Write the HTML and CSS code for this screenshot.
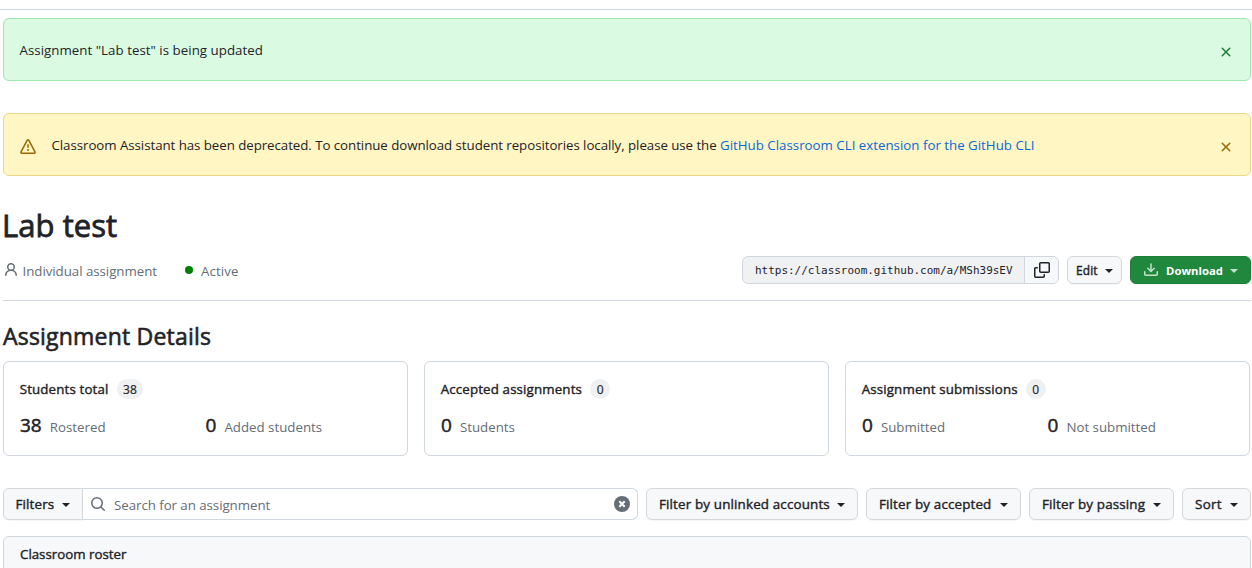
FILE: index.html
```html
<!DOCTYPE html>
<html lang="en">
<head>
<meta charset="utf-8">
<title>Lab test</title>
<link rel="stylesheet" href="styles.css">
</head>
<body>
<div class="topline"></div>
<main class="page">
  <div class="flash flash-success">
    <span class="flash-text"><span class="t t-updated">Assignment "Lab test" is being updated</span></span>
    <svg class="close" width="16" height="16" viewBox="0 0 16 16"><path d="M3.72 3.72a.75.75 0 0 1 1.06 0L8 6.94l3.22-3.22a.749.749 0 0 1 1.275.326.749.749 0 0 1-.215.734L9.06 8l3.22 3.22a.749.749 0 0 1-.326 1.275.749.749 0 0 1-.734-.215L8 9.06l-3.22 3.22a.751.751 0 0 1-1.042-.018.751.751 0 0 1-.018-1.042L6.94 8 3.72 4.78a.75.75 0 0 1 0-1.06Z"/></svg>
  </div>
  <div class="flash flash-warn">
    <svg class="alert" width="16" height="16" viewBox="0 0 16 16"><path d="M6.457 1.047c.659-1.234 2.427-1.234 3.086 0l6.082 11.378A1.75 1.75 0 0 1 14.082 15H1.918a1.75 1.75 0 0 1-1.543-2.575Zm1.763.707a.25.25 0 0 0-.44 0L1.698 13.132a.25.25 0 0 0 .22.368h12.164a.25.25 0 0 0 .22-.368Zm.53 3.996v2.5a.75.75 0 0 1-1.5 0v-2.5a.75.75 0 0 1 1.5 0ZM9 11a1 1 0 1 1-2 0 1 1 0 0 1 2 0Z"/></svg>
    <span class="flash-text"><span class="t t-warn">Classroom Assistant has been deprecated. To continue download student repositories locally, please use the </span><a class="t">GitHub Classroom CLI extension for the GitHub CLI</a></span>
    <svg class="close" width="16" height="16" viewBox="0 0 16 16"><path d="M3.72 3.72a.75.75 0 0 1 1.06 0L8 6.94l3.22-3.22a.749.749 0 0 1 1.275.326.749.749 0 0 1-.215.734L9.06 8l3.22 3.22a.749.749 0 0 1-.326 1.275.749.749 0 0 1-.734-.215L8 9.06l-3.22 3.22a.751.751 0 0 1-1.042-.018.751.751 0 0 1-.018-1.042L6.94 8 3.72 4.78a.75.75 0 0 1 0-1.06Z"/></svg>
  </div>

  <h1 class="title">Lab test</h1>
  <div class="meta">
    <svg class="person" width="16" height="16" viewBox="0 0 16 16"><path d="M10.561 8.073a6.005 6.005 0 0 1 3.432 5.142.75.75 0 1 1-1.498.07 4.5 4.5 0 0 0-8.99 0 .75.75 0 0 1-1.498-.07 6.004 6.004 0 0 1 3.431-5.142 3.999 3.999 0 1 1 5.123 0ZM10.5 5a2.5 2.5 0 1 0-5 0 2.5 2.5 0 0 0 5 0Z"/></svg>
    <span class="kind">Individual assignment</span>
    <span class="dot"></span>
    <span class="active">Active</span>
    <div class="actions">
      <div class="link-box">
        <span class="url">https://classroom.github.com/a/MSh39sEV</span>
        <span class="copy"><svg width="16" height="16" viewBox="0 0 16 16"><path d="M0 6.75C0 5.784.784 5 1.75 5h1.5a.75.75 0 0 1 0 1.5h-1.5a.25.25 0 0 0-.25.25v7.5c0 .138.112.25.25.25h7.5a.25.25 0 0 0 .25-.25v-1.5a.75.75 0 0 1 1.5 0v1.5A1.75 1.75 0 0 1 9.25 16h-7.5A1.75 1.75 0 0 1 0 14.25Z"/><path d="M5 1.75C5 .784 5.784 0 6.75 0h7.5C15.216 0 16 .784 16 1.75v7.5A1.75 1.75 0 0 1 14.25 11h-7.5A1.75 1.75 0 0 1 5 9.25Zm1.75-.25a.25.25 0 0 0-.25.25v7.5c0 .138.112.25.25.25h7.5a.25.25 0 0 0 .25-.25v-7.5a.25.25 0 0 0-.25-.25Z"/></svg></span>
      </div>
      <button class="btn btn-sm edit"><span>Edit</span><i class="caret"></i></button>
      <button class="btn btn-sm download"><svg width="16" height="16" viewBox="0 0 16 16"><path d="M2.75 14A1.75 1.75 0 0 1 1 12.25v-2.5a.75.75 0 0 1 1.5 0v2.5c0 .138.112.25.25.25h10.5a.25.25 0 0 0 .25-.25v-2.5a.75.75 0 0 1 1.5 0v2.5A1.75 1.75 0 0 1 13.25 14Z"/><path d="M7.25 7.689V2a.75.75 0 0 1 1.5 0v5.689l1.97-1.969a.749.749 0 1 1 1.06 1.06l-3.25 3.25a.749.749 0 0 1-1.06 0L4.22 6.78a.749.749 0 1 1 1.06-1.06l1.97 1.969Z"/></svg><span class="label">Download</span><i class="caret"></i></button>
    </div>
  </div>

  <h2 class="subtitle">Assignment Details</h2>
  <div class="cards">
    <section class="card">
      <div class="card-head"><span>Students total</span><span class="counter">38</span></div>
      <div class="stats">
        <div class="stat"><b>38</b><span>Rostered</span></div>
        <div class="stat"><b>0</b><span>Added students</span></div>
      </div>
    </section>
    <section class="card">
      <div class="card-head"><span>Accepted assignments</span><span class="counter">0</span></div>
      <div class="stats">
        <div class="stat"><b>0</b><span>Students</span></div>
      </div>
    </section>
    <section class="card">
      <div class="card-head"><span>Assignment submissions</span><span class="counter">0</span></div>
      <div class="stats">
        <div class="stat"><b>0</b><span>Submitted</span></div>
        <div class="stat"><b>0</b><span>Not submitted</span></div>
      </div>
    </section>
  </div>

  <div class="toolbar">
    <div class="search">
      <button class="btn filters"><span>Filters</span><i class="caret"></i></button>
      <div class="field">
        <svg width="16" height="16" viewBox="0 0 16 16"><path d="M10.68 11.74a6 6 0 0 1-7.922-8.982 6 6 0 0 1 8.982 7.922l3.04 3.04a.749.749 0 0 1-.326 1.275.749.749 0 0 1-.734-.215ZM11.5 7a4.499 4.499 0 1 0-8.997 0A4.499 4.499 0 0 0 11.5 7Z"/></svg>
        <span class="placeholder">Search for an assignment</span>
        <svg class="clear" width="16" height="16" viewBox="0 0 16 16"><circle cx="8" cy="8" r="8"/><path d="M5.3 5.3l5.4 5.4M10.7 5.3l-5.4 5.4"/></svg>
      </div>
    </div>
    <button class="btn b-unlinked"><span>Filter by unlinked accounts</span><i class="caret"></i></button>
    <button class="btn b-accepted"><span>Filter by accepted</span><i class="caret"></i></button>
    <button class="btn b-passing"><span>Filter by passing</span><i class="caret"></i></button>
    <button class="btn b-sort"><span>Sort</span><i class="caret"></i></button>
  </div>

  <div class="roster">Classroom roster</div>
</main>
</body>
</html>
```
FILE: styles.css
```css
* { box-sizing: border-box; }
body { margin: 0; height: 568px; overflow: hidden; background: #fff; color: #1f2328; font: 13.3px/21px "Open Sans", "Noto Sans", sans-serif; }
svg { display: block; flex: none; fill: currentColor; }
.topline { height: 10px; border-bottom: 1px solid #d0d7de; }
.page { margin: 8px 1px 0 3px; }
.t { white-space: pre; }

.flash { display: flex; align-items: center; height: 63px; padding: 0 16px; border: 1px solid; border-radius: 6px; }
.flash-text { flex: 1; padding-top: 2px; margin-left: -0.5px; }
.t-updated { letter-spacing: 0.03px; }
.t-warn { letter-spacing: -0.055px; }
.close { margin-top: 4px; }
.flash-success { background: #dafbe1; border-color: #a1e5b0; }
.flash-success .close { color: #1a7f37; }
.flash-warn { margin-top: 32px; background: #fff6c4; border-color: #eed888; }
.flash-warn svg { color: #9a6700; }
.alert { margin: 4px 16px 0 0; }
a { color: #0969da; }

/* Medium weight: regular glyphs with a thin outline */
.title, .subtitle, .card-head, .stat b, .btn, .roster { font-weight: 400; -webkit-text-stroke: 0.4px currentColor; }
.title { margin: 25px 0 0 -1px; padding-bottom: 1px; font-size: 31px; line-height: 48px; letter-spacing: 0.05px; -webkit-text-stroke-width: 0.8px; }
.meta { display: flex; align-items: center; height: 51px; padding-bottom: 10px; border-bottom: 1px solid #d0d7de; color: #656d76; }
.kind { width: 162px; margin: 0 0.5px 0 -0.5px; padding-top: 2px; letter-spacing: -0.04px; }
.person { margin-right: 4px; }
.dot { width: 8px; height: 8px; border-radius: 50%; background: #008000; margin-right: 8px; }
.active { padding-top: 2px; letter-spacing: 0.1px; }
.actions { display: flex; margin-left: auto; color: #1f2328; }
.link-box { display: flex; width: 317px; height: 28px; margin-right: 8px; border: 1px solid #d0d7de; border-radius: 6px; overflow: hidden; background: #eff1f3; }
.url { flex: 1; padding-left: 12px; font: 10.98px/28px "DejaVu Sans Mono", monospace; }
.copy { width: 34px; display: grid; place-items: center; border-left: 1px solid #d0d7de; background: #f6f8fa; }

.btn { display: flex; align-items: center; justify-content: space-between; height: 32px; margin: 0; padding: 0 12px; border: 1px solid #d5d8da; border-radius: 6px; background: #f6f8fa; color: #1f2328; font: 13.4px/20px "Open Sans", sans-serif; letter-spacing: 0.15px; white-space: nowrap; box-shadow: 0 1px 0 rgba(31,35,40,.04); }
.caret { flex: none; width: 0; height: 0; margin-top: 1px; border: 4px solid transparent; border-top-color: currentColor; border-bottom: 0; }
.btn-sm { height: 28px; font-size: 11.9px; padding: 0 8px; }
.edit { width: 55px; margin-right: 8px; }
.download { width: 121px; padding: 0 12px; background: #1f883d; border-color: #1f7d3a; color: #fff; font-weight: 700; font-size: 11.3px; letter-spacing: 0; -webkit-text-stroke-width: 0; }
.label { padding-top: 1px; }
.download svg, .download .caret { opacity: .75; }

.subtitle { margin: 16px 0 0; font-size: 23px; line-height: 38px; padding-bottom: 2px; letter-spacing: 0.2px; -webkit-text-stroke-width: 0.6px; }
.cards { display: flex; gap: 16px; margin-top: 4px; }
.card { width: 405px; height: 95px; padding: 16px; border: 1px solid #d0d7de; border-radius: 6px; }
.card-head { display: flex; align-items: center; height: 22px; margin-left: -0.3px; letter-spacing: 0.15px; }
.counter { margin-left: 8px; min-width: 20px; padding: 1px 6.6px 0; border-radius: 10px; background: #eff0f2; text-align: center; font: 12px/19px "Open Sans", sans-serif; letter-spacing: 0; -webkit-text-stroke-width: 0.2px; }
.stats { display: flex; margin-top: 11px; }
.stat { display: flex; align-items: baseline; width: 50%; height: 30px; color: #656d76; }
.stat b { margin-right: 8px; font-size: 19px; line-height: 28px; color: #1f2328; -webkit-text-stroke-width: 0.5px; }

.toolbar { display: flex; gap: 8px; margin-top: 32px; }
.search { display: flex; width: 635px; }
.filters { width: 80px; padding-left: 11.5px; border-radius: 6px 0 0 6px; }
.field { flex: 1; display: flex; align-items: center; height: 32px; padding: 0 7px; border: 1px solid #d0d7de; border-left: 0; border-radius: 0 6px 6px 0; color: #656d76; }
.placeholder { flex: 1; padding: 2px 0 0 8px; letter-spacing: -0.05px; }
.clear path { fill: none; stroke: #fff; stroke-width: 2; }
.b-unlinked { width: 212px; }
.b-accepted { width: 155px; }
.b-passing { width: 145px; }
.b-sort { width: 69px; letter-spacing: 0.3px; }

.roster { height: 60px; margin-top: 16px; padding: 7px 16px; border: 1px solid #d0d7de; border-radius: 6px 6px 0 0; background: #f6f8fa; }
```
